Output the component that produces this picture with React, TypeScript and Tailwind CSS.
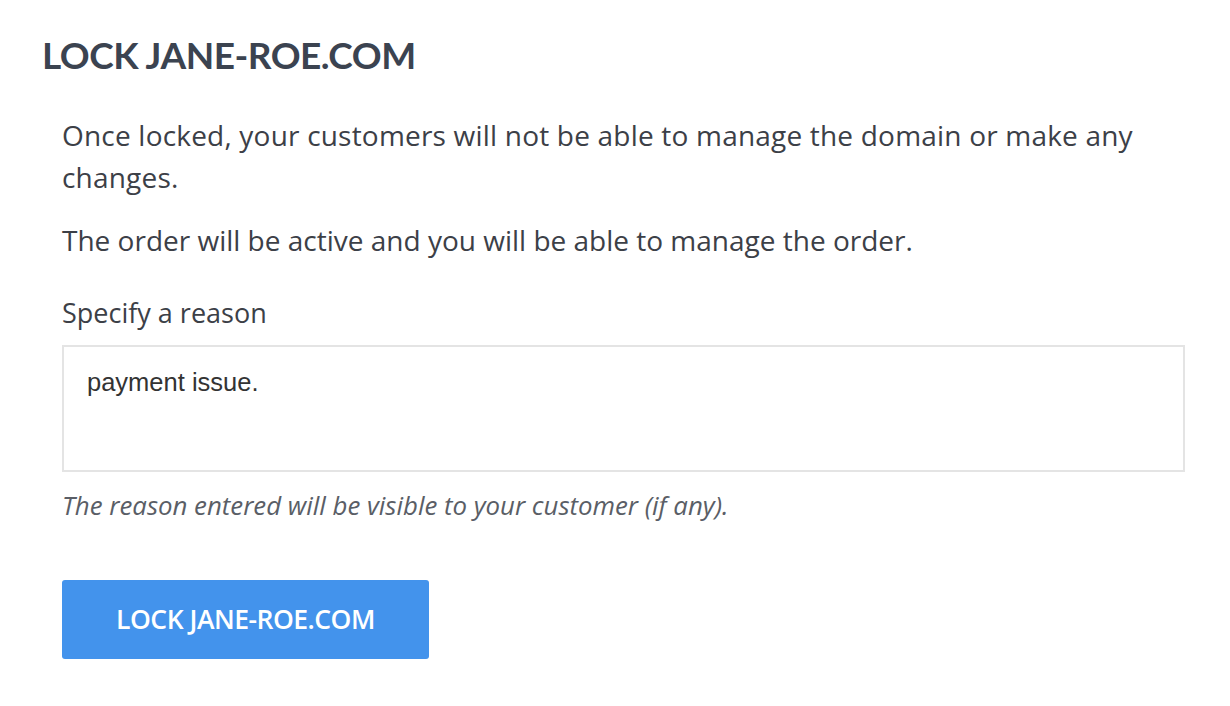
import { useEffect, useRef, useState } from "react";

const LockDomain = () => {
  const [reason, setReason] = useState("payment issue.");
  const reasonRef = useRef<HTMLTextAreaElement>(null);

  // put the cursor after the typed reason
  useEffect(() => {
    const el = reasonRef.current;
    if (el) {
      el.focus();
      el.setSelectionRange(el.value.length, el.value.length);
    }
  }, []);

  return (
    <div className="min-h-screen bg-white">
      <div className="pl-[42px] pr-[45px] pt-[35px]">
        <h2 className="font-['Lato',sans-serif] text-[37px] font-bold leading-[40px] tracking-[-0.5px] text-[#3b4350]">
          LOCK JANE-ROE.COM
        </h2>

        <div className="pl-[20px] pt-[39px] font-['Open_Sans',sans-serif] text-[#3c4047]">
          <p className="text-[28px] leading-[42px] tracking-[0.2px]">
            Once locked, your customers will not be able to manage the domain or make any changes.
          </p>
          <p className="mt-[21px] text-[28px] leading-[42px]">
            The order will be active and you will be able to manage the order.
          </p>

          {/* reason field */}
          <label className="mt-[31px] block text-[27px] leading-[42px]">Specify a reason</label>
          <textarea
            ref={reasonRef}
            value={reason}
            onChange={(e) => setReason(e.target.value)}
            className="mt-[11px] block h-[127px] w-full resize-none border-2 border-[#e4e4e4] px-[23px] pt-[19px] pb-[15px] font-['Liberation_Sans',Arial,sans-serif] text-[25.5px] leading-[32px] text-[#333] caret-[#222] outline-none"
          />
          <p className="mt-[14px] text-[25.8px] italic leading-[38px] text-[#5a5e66]">
            The reason entered will be visible to your customer (if any).
          </p>

          <button className="mt-[56px] h-[79px] w-[367px] rounded-[3px] bg-[#4393ec] text-[26.5px] font-semibold tracking-[-0.5px] text-white">
            LOCK JANE-ROE.COM
          </button>
        </div>
      </div>
    </div>
  );
};

export default LockDomain;
